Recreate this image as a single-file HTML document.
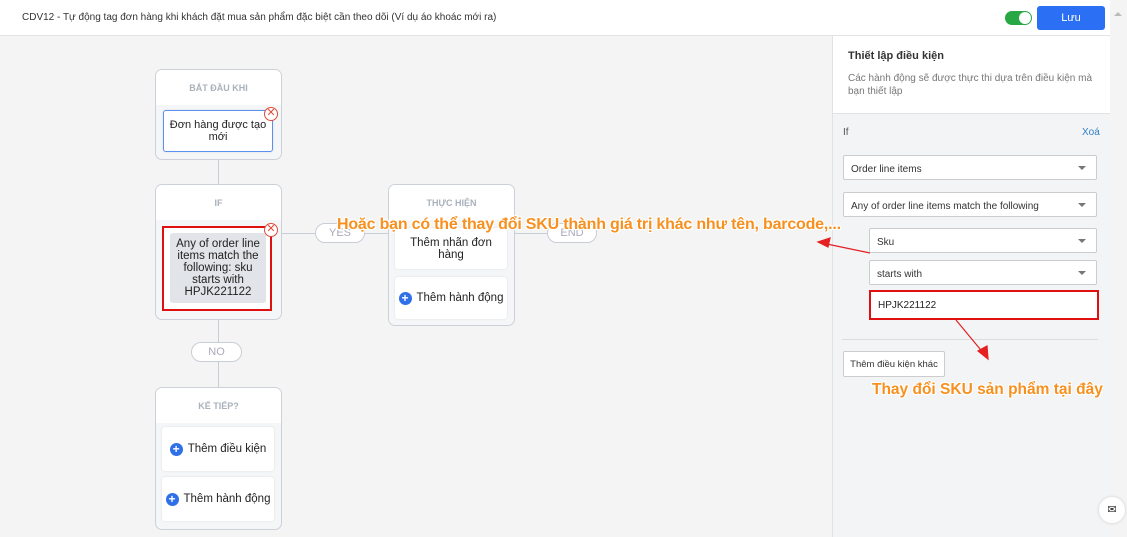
<!DOCTYPE html>
<html><head><meta charset="utf-8"><style>
*{box-sizing:border-box;margin:0;padding:0}
body{width:1127px;height:537px;overflow:hidden;background:#f4f4f4;font-family:"Liberation Sans","Noto Sans CJK SC",sans-serif;position:relative;color:#222}
.a{position:absolute}
.box{position:absolute;background:#f5f6f8;border:1px solid #ccd1d9;border-radius:7px;overflow:hidden}
.box .h{height:35px;background:#fff;text-align:center;font-size:9px;font-weight:bold;color:#a9b1bb;line-height:36px}
.card{position:absolute;background:#fff;border-radius:3px;box-shadow:0 0 2px #ddd;font-size:11.5px;text-align:center;display:flex;align-items:center;justify-content:center;line-height:12px}
.plus{display:inline-block;width:13px;height:13px;border-radius:50%;background:#2f6fe8;color:#fff;font-size:12px;line-height:13px;text-align:center;font-weight:bold;margin-right:5px}
.pill{position:absolute;height:20px;border:1px solid #c9ced6;border-radius:10px;background:#fff;color:#aab;font-size:11px;text-align:center;line-height:18px}
.ln{position:absolute;background:#c9ced6}
.x{position:absolute;width:14px;height:14px;border:1.5px solid #e04a3a;border-radius:50%;color:#e04a3a;font-size:11px;line-height:11px;text-align:center;background:#fff}
.sel{position:absolute;background:#fff;border:1px solid #ccc;border-radius:2px;font-size:10px;padding-left:7px;padding-top:4px;display:flex;align-items:center;color:#333}
.sel:after{content:"";position:absolute;right:10px;top:10px;border:4px solid transparent;border-top-color:#777}
.or{position:absolute;font-weight:bold;color:#f7901e;text-shadow:-1px -1px 0 #fff,1px -1px 0 #fff,-1px 1px 0 #fff,1px 1px 0 #fff,0 0 2px #fff;white-space:nowrap}
</style></head><body>
<div class="a" style="left:0;top:0;width:1110px;height:36px;background:#fff;border-bottom:1px solid #e3e3e3"></div>
<div class="a" style="left:22px;top:12px;font-size:10px;color:#333">CDV12 - Tự động tag đơn hàng khi khách đặt mua sản phẩm đặc biệt cần theo dõi (Ví dụ áo khoác mới ra)</div>
<div class="a" style="left:1005px;top:11px;width:27px;height:14px;border-radius:7px;background:#27a844"><div class="a" style="right:1px;top:1px;width:12px;height:12px;border-radius:50%;background:#fff"></div></div>
<div class="a" style="left:1037px;top:6px;width:68px;height:24px;border-radius:3px;background:#2b6ff5;color:#fff;font-size:11px;text-align:center;line-height:24px">Lưu</div>
<div class="a" style="left:1110px;top:0;width:17px;height:537px;background:#f4f4f4"></div>
<div class="a" style="left:1114px;top:8px;border:4px solid transparent;border-bottom-color:#bbb"></div>

<div class="a" style="left:832px;top:36px;width:278px;height:501px;background:#f3f4f6;border-left:1px solid #e2e2e2"></div>
<div class="a" style="left:833px;top:36px;width:277px;height:78px;background:#fff;border-bottom:1px solid #e2e2e2"></div>
<div class="a" style="left:848px;top:50px;font-size:11px;font-weight:bold;color:#333">Thiết lập điều kiện</div>
<div class="a" style="left:848px;top:72px;width:250px;font-size:10px;color:#777;line-height:13px">Các hành động sẽ được thực thi dựa trên điều kiện mà bạn thiết lập</div>
<div class="a" style="left:843px;top:127px;font-size:10px;color:#555">If</div>
<div class="a" style="left:1082px;top:127px;font-size:10px;color:#2f7fc1">Xoá</div>
<div class="sel" style="left:843px;top:155px;width:254px;height:25px">Order line items</div>
<div class="sel" style="left:843px;top:192px;width:254px;height:25px">Any of order line items match the following</div>
<div class="sel" style="left:869px;top:228px;width:228px;height:25px">Sku</div>
<div class="sel" style="left:869px;top:260px;width:228px;height:25px">starts with</div>
<div class="a" style="left:869px;top:290px;width:230px;height:30px;border:2px solid #e01010;background:#fff;font-size:10px;padding-top:8px;padding-left:7px">HPJK221122</div>
<div class="a" style="left:842px;top:339px;width:256px;height:1px;background:#ddd"></div>
<div class="a" style="left:843px;top:351px;width:102px;height:26px;border:1px solid #ccc;border-radius:2px;background:#fff;font-size:9.5px;text-align:center;padding-top:7px;color:#333">Thêm điều kiện khác</div>
<div class="a" style="left:1099px;top:497px;width:26px;height:26px;border-radius:50%;background:#fff;box-shadow:0 0 3px #ccc;font-size:11px;text-align:center;line-height:26px">✉</div>

<div class="ln" style="left:218px;top:159px;width:1px;height:26px"></div>
<div class="ln" style="left:281px;top:233px;width:107px;height:1px"></div>
<div class="ln" style="left:514px;top:233px;width:35px;height:1px"></div>
<div class="ln" style="left:218px;top:319px;width:1px;height:69px"></div>

<div class="box" style="left:155px;top:69px;width:127px;height:91px"><div class="h">BẮT ĐẦU KHI</div></div>
<div class="card" style="left:163px;top:110px;width:110px;height:42px;border:1px solid #5b8ff0;font-size:11px;white-space:nowrap">Đơn hàng được tạo<br>mới</div>
<div class="x" style="left:264px;top:107px">✕</div>

<div class="box" style="left:155px;top:184px;width:127px;height:136px"><div class="h">IF</div></div>
<div class="a" style="left:162px;top:226px;width:110px;height:85px;border:2px solid #e01010;background:#fff"></div>
<div class="card" style="left:170px;top:233px;width:96px;height:70px;background:#e1e4e8;box-shadow:none;line-height:12px">Any of order line items match the following: sku starts with HPJK221122</div>
<div class="x" style="left:264px;top:223px">✕</div>

<div class="box" style="left:388px;top:184px;width:127px;height:142px"><div class="h">THỰC HIỆN</div></div>
<div class="card" style="left:395px;top:228px;width:112px;height:41px">Thêm nhãn đơn<br>hàng</div>
<div class="card" style="left:395px;top:277px;width:112px;height:42px"><span class="plus">+</span>Thêm hành động</div>

<div class="pill" style="left:315px;top:223px;width:50px">YES</div>
<div class="pill" style="left:547px;top:223px;width:50px">END</div>
<div class="pill" style="left:191px;top:342px;width:51px">NO</div>

<div class="box" style="left:155px;top:387px;width:127px;height:143px"><div class="h">KẾ TIẾP?</div></div>
<div class="card" style="left:162px;top:427px;width:112px;height:44px"><span class="plus">+</span>Thêm điều kiện</div>
<div class="card" style="left:162px;top:477px;width:112px;height:44px"><span class="plus">+</span>Thêm hành động</div>

<div class="or" style="left:337px;top:216px;font-size:16px;letter-spacing:-0.2px">Hoặc bạn có thể thay đổi SKU thành giá trị khác như tên, barcode,...</div>
<div class="or" style="left:872px;top:381px;font-size:15.5px">Thay đổi SKU sản phẩm tại đây</div>
<svg class="a" style="left:0;top:0" width="1127" height="537"><g stroke="#e52020" stroke-width="1.2" fill="#e52020">
<line x1="870" y1="253" x2="822" y2="243"/><polygon points="818,242 830,238 828,247"/>
<line x1="956" y1="320" x2="985" y2="355"/><polygon points="988,359 978,351 987,346"/></g></svg>
</body></html>
